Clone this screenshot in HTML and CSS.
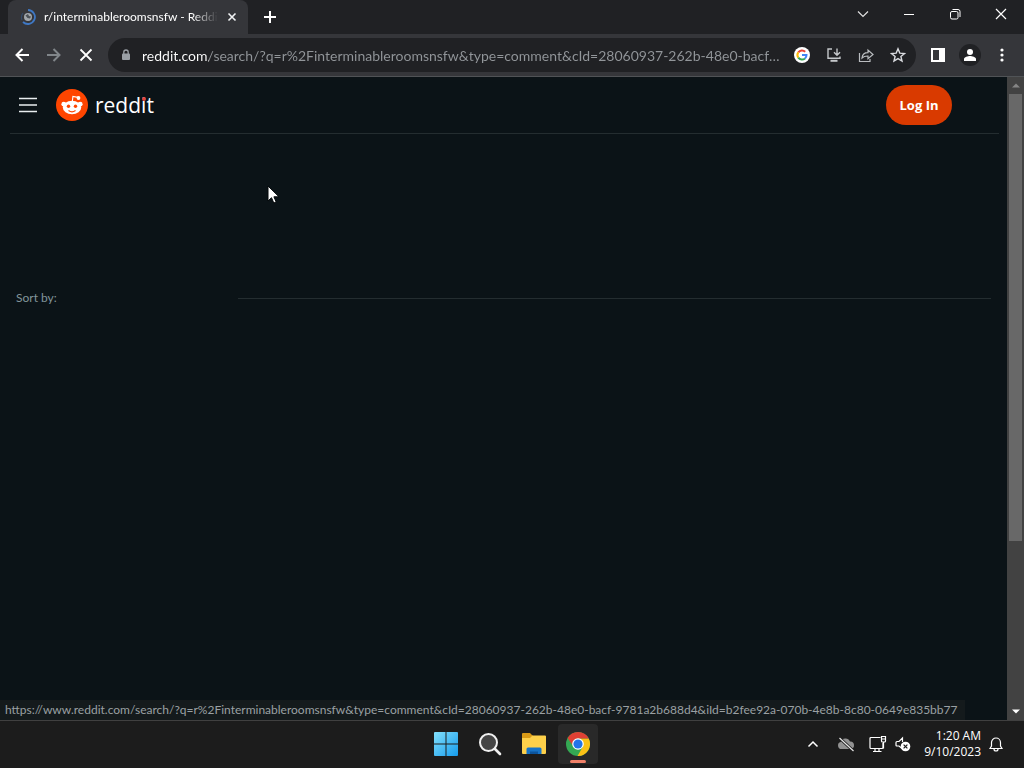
FILE: index.html
```html
<!DOCTYPE html>
<html lang="en">
<head>
<meta charset="utf-8">
<title>r/interminableroomsnsfw - Reddit</title>
<link rel="stylesheet" href="styles.css">
</head>
<body>
<header class="browser">
  <div class="tabstrip">
    <div class="tab">
      <svg class="favicon" width="16" height="16" viewBox="0 0 16 16" fill="none"><circle cx="8" cy="8" r="4" fill="#a0a6ab"/><path d="M5.500 6.500l2.500-1.500 1 2 2 .5-1 2-2.500-.5z" fill="#4b5157"/><path d="M8 1a7 7 0 1 1-5 12" stroke="#3f78c4" stroke-width="1.800"/><path d="M2 11A7 7 0 0 1 3 4" stroke="#334b6b" stroke-width="1.200"/></svg>
      <span class="tab-title">r/interminableroomsnsfw - Reddi</span>
      <button class="icon-btn tab-close" aria-label="Close tab"><svg width="10" height="10" viewBox="0 0 10 10" stroke="#f1f3f4" stroke-width="1.600"><path d="M1.500 1.500l7 7M8.500 1.500l-7 7"/></svg></button>
    </div>
    <button class="icon-btn new-tab" aria-label="New tab"><svg width="14" height="14" viewBox="0 0 14 14" stroke="#fff" stroke-width="2"><path d="M7 1v12M1 7h12"/></svg></button>
    <div class="window-controls">
      <button class="icon-btn" aria-label="Search tabs"><svg width="12" height="12" viewBox="0 0 12 12" fill="none" stroke="#e0e0e0" stroke-width="1.200"><path d="M1 3.500l5 5 5-5"/></svg></button>
      <button class="icon-btn" aria-label="Minimize"><svg width="10" height="12" viewBox="0 0 10 12" stroke="#fff"><path d="M0 6.500h10"/></svg></button>
      <button class="icon-btn" aria-label="Restore"><svg width="12" height="12" viewBox="0 0 12 12" fill="none" stroke="#fff"><rect x="1.500" y="3.500" width="7.500" height="7.500" rx="1.500"/><path d="M3.500 1.500H9a2 2 0 0 1 2 2V9"/></svg></button>
      <button class="icon-btn" aria-label="Close"><svg width="12" height="12" viewBox="0 0 12 12" stroke="#fff" stroke-width="1.200"><path d="M1 1l10 10M11 1L1 11"/></svg></button>
    </div>
  </div>
  <div class="toolbar">
    <div class="nav">
      <button class="icon-btn" aria-label="Back"><svg width="16" height="16" viewBox="0 0 16 16" fill="none" stroke="#fff" stroke-width="2"><path d="M15 8H2.500M8.500 2L2.500 8l6 6"/></svg></button>
      <button class="icon-btn" aria-label="Forward"><svg width="16" height="16" viewBox="0 0 16 16" fill="none" stroke="#81868a" stroke-width="2"><path d="M1 8h12.500M7.500 2l6 6-6 6"/></svg></button>
      <button class="icon-btn" aria-label="Stop loading"><svg width="14" height="14" viewBox="0 0 14 14" stroke="#fff" stroke-width="1.800"><path d="M1.500 1.500l11 11M12.500 1.500l-11 11"/></svg></button>
    </div>
    <div class="omnibox">
      <svg class="lock" width="10" height="12" viewBox="0 0 10 12"><rect x="1" y="4.500" width="8" height="6.500" rx="1" fill="#9aa0a6"/><path d="M2.800 5V3.200a2.200 2.200 0 0 1 4.400 0V5" fill="none" stroke="#9aa0a6" stroke-width="1.300"/></svg>
      <input class="url" type="text" aria-label="Address and search bar" value="reddit.com/search/?q=r%2Finterminableroomsnsfw&amp;type=comment&amp;cId=28060937-262b-48e0-bacf-9781a2b688d4&amp;iId=b2fee92a-070b-4e8b-8c80-0649e835bb77">
      <div class="page-actions">
        <button class="icon-btn" aria-label="Search with Google"><svg width="16" height="16" viewBox="0 0 16 16"><circle cx="8" cy="8" r="8" fill="#fff"/><g fill="none" stroke-width="2"><path d="M4.300 5.400A4.500 4.500 0 0 1 11.200 4.800" stroke="#ea4335"/><path d="M4.300 10.600a4.500 4.500 0 0 1 0-5.200" stroke="#fbbc05"/><path d="M11 11.400a4.500 4.500 0 0 1-6.700-.8" stroke="#34a853"/><path d="M8 8h4.500a4.500 4.500 0 0 1-1.500 3.400" stroke="#4285f4"/></g></svg></button>
        <button class="icon-btn" aria-label="Install app"><svg width="16" height="16" viewBox="0 0 16 16" fill="none" stroke="#c4c7ca" stroke-width="1.400"><path d="M6 2H2v9.300h12V9.500M11 1.500V8M8 5.300l3 3 3-3"/><path d="M4.500 13.800h7" stroke-width="2"/></svg></button>
        <button class="icon-btn" aria-label="Share"><svg width="16" height="16" viewBox="0 0 16 16" fill="none" stroke="#b9bcbf" stroke-width="1.200"><path d="M1.500 6v8.500H12V12"/><path d="M4 11c.3-3.400 2.300-5.300 6-5.300V3l5 4.500-5 4.300V9C7.300 8.900 5.500 9.500 4 11z"/></svg></button>
        <button class="icon-btn" aria-label="Bookmark this tab"><svg width="16" height="16" viewBox="0 0 16 16" fill="none" stroke="#dadce0" stroke-width="1.400"><path d="M8 1.800l1.800 4.300 4.700.4-3.600 3 1.100 4.600L8 11.600l-4 2.500 1.100-4.600-3.600-3 4.700-.4z"/></svg></button>
      </div>
    </div>
    <div class="tools">
      <button class="icon-btn" aria-label="Side panel"><svg width="16" height="16" viewBox="0 0 16 16"><path fill="#fff" fill-rule="evenodd" d="M1 1h14v14H1zM3 3v10h6V3z"/></svg></button>
      <button class="icon-btn profile" aria-label="Profile"><svg width="14" height="14" viewBox="0 0 14 14" fill="#fff"><circle cx="7" cy="4" r="3"/><path d="M1 13v-2c0-2 4-3 6-3s6 1 6 3v2z"/></svg></button>
      <button class="icon-btn" aria-label="Menu"><svg width="4" height="14" viewBox="0 0 4 14" fill="#fff"><circle cx="2" cy="2" r="1.600"/><circle cx="2" cy="7" r="1.600"/><circle cx="2" cy="12" r="1.600"/></svg></button>
    </div>
  </div>
</header>

<div class="viewport">
  <main class="page">
    <header class="site-header">
      <button class="icon-btn" aria-label="Open navigation"><svg width="18" height="16" viewBox="0 0 18 16" stroke="#e9eef0" stroke-width="1.300"><path d="M0 1.500h18M0 8h18M0 14.500h18"/></svg></button>
      <a class="brand" href="#">
        <svg width="32" height="32" viewBox="0 0 32 32"><circle cx="16" cy="16" r="16" fill="#ff4500"/><path d="M16.300 13l.6-5.600 5 1" fill="none" stroke="#fff" stroke-width="1.100"/><circle cx="22.500" cy="9" r="1.900" fill="#fff"/><g fill="#fff"><circle cx="7.800" cy="15.200" r="2.400"/><circle cx="24.200" cy="15.200" r="2.400"/><ellipse cx="16" cy="18.500" rx="9.200" ry="6.800"/></g><circle cx="12.500" cy="17.300" r="1.700" fill="#ff4500"/><circle cx="19.500" cy="17.300" r="1.700" fill="#ff4500"/><path d="M12.500 21.500c2 1.500 5 1.500 7 0" fill="none" stroke="#ff4500" stroke-width="1.100"/></svg>
        <span class="wordmark">redd<span class="dotted">i</span>t</span>
      </a>
      <button class="login">Log In</button>
    </header>
    <section class="sort">
      <span class="sort-label">Sort by:</span>
      <hr class="sort-rule">
    </section>
  </main>
  <div class="scrollbar">
    <button class="icon-btn scroll-btn" aria-label="Scroll up"><svg width="8" height="5" viewBox="0 0 8 5"><path d="M0 4.500L4 .5l4 4z" fill="#858585"/></svg></button>
    <div class="track"><div class="thumb"></div></div>
    <button class="icon-btn scroll-btn" aria-label="Scroll down"><svg width="8" height="5" viewBox="0 0 8 5"><path d="M0 .5l4 4 4-4z" fill="#fff"/></svg></button>
  </div>
  <div class="status">https://www.reddit.com/search/?q=r%2Finterminableroomsnsfw&amp;type=comment&amp;cId=28060937-262b-48e0-bacf-9781a2b688d4&amp;iId=b2fee92a-070b-4e8b-8c80-0649e835bb77</div>
  <svg class="pointer" width="13" height="19" viewBox="0 0 13 19"><path d="M1 1v15l3.500-3.300L6.800 18l2.400-1-2.300-5.200H12z" fill="#fff" stroke="#05090b"/></svg>
</div>

<footer class="taskbar">
  <nav class="apps">
    <button class="icon-btn app" aria-label="Start"><svg width="24" height="24" viewBox="0 0 24 24"><defs><linearGradient id="win" x2="1" y2="1"><stop stop-color="#83e0fc"/><stop offset="1" stop-color="#159bec"/></linearGradient></defs><path d="M0 1q0-1 1-1h10.500v11.500H0zM12.500 0H23q1 0 1 1v10.500H12.500zM0 12.500h11.500V24H1q-1 0-1-1zM12.500 12.500H24V23q0 1-1 1H12.500z" fill="url(#win)"/></svg></button>
    <button class="icon-btn app" aria-label="Search"><svg width="24" height="24" viewBox="0 0 24 24"><circle cx="10.500" cy="10.500" r="8.500" fill="#454545" stroke="#f0f0f0" stroke-width="2"/><path d="M17 17l5 5" stroke="#f0f0f0" stroke-width="2.600" stroke-linecap="round"/></svg></button>
    <button class="icon-btn app" aria-label="File Explorer"><svg width="26" height="24" viewBox="0 0 26 24"><path d="M1 2q0-1 1-1h7l2.500 2.500H12V9H1z" fill="#d99a16"/><path d="M1 6h8l2.500-2.500H24q1 0 1 1V21q0 1-1 1H2q-1 0-1-1z" fill="#fdd04a"/><path d="M5.500 22v-5q0-1.500 1.500-1.500h12q1.500 0 1.500 1.500v5z" fill="#1673c7"/><path d="M9 22v-2.500h8V22z" fill="#0c549c"/></svg></button>
    <button class="icon-btn app active" aria-label="Google Chrome"><svg width="24" height="24" viewBox="0 0 24 24"><circle cx="12" cy="12" r="12" fill="#34a853"/><path d="M12 6.500h10.700A12 12 0 0 1 11.500 24L17 14.500z" fill="#fbc116"/><path d="M1.600 6A12 12 0 0 1 12 0a12 12 0 0 1 10.700 6.500H12a5.500 5.500 0 0 0-5 7.500z" fill="#df4034"/><circle cx="12" cy="12" r="5.800" fill="#fff"/><circle cx="12" cy="12" r="4.600" fill="#2374e8"/></svg></button>
  </nav>
  <div class="tray">
    <button class="icon-btn" aria-label="Show hidden icons"><svg width="12" height="12" viewBox="0 0 12 12" fill="none" stroke="#fff" stroke-width="1.500"><path d="M1.500 8.500L6 4l4.500 4.500"/></svg></button>
    <button class="icon-btn" aria-label="OneDrive"><svg width="18" height="16" viewBox="0 0 18 16"><path d="M4.500 13a3.500 3.500 0 0 1-.8-6.900A5 5 0 0 1 13 5.500a3.700 3.700 0 0 1 .5 7.500z" fill="#929292"/><path d="M2.500 2l14 13" stroke="#1c1c1c" stroke-width="3"/><path d="M2.500 2l14 13" stroke="#e8e8e8" stroke-width="1.200"/></svg></button>
    <button class="icon-btn" aria-label="Network"><svg width="18" height="18" viewBox="0 0 18 18" fill="none" stroke="#fff" stroke-width="1.200"><path d="M11.500 2.500H2q-1 0-1 1v9q0 1 1 1h11q1 0 1-1V8M6 13.500v3M10 13.500v3M4 16.500h8.500"/><path d="M12.500 1.500h4V6q0 1-1 1h-2q-1 0-1-1zM12.500 4h4M14.500 7v6.500"/></svg></button>
    <button class="icon-btn" aria-label="Volume"><svg width="16" height="16" viewBox="0 0 16 16" fill="none" stroke="#fff" stroke-width="1.200"><path d="M7 12.500L4 10H2q-1 0-1-1V6.500q0-1 1-1h2L7.500 2v4"/><circle cx="10.500" cy="10.500" r="4.800" fill="#fff" stroke="none"/><path d="M8.600 8.600l3.800 3.800M12.400 8.600l-3.800 3.800" stroke="#1c1c1c"/></svg></button>
    <time class="clock"><span>1:20 AM</span><span>9/10/2023</span></time>
    <button class="icon-btn" aria-label="Notifications"><svg width="14" height="16" viewBox="0 0 14 16" fill="none" stroke="#fff" stroke-width="1.200"><path d="M2.500 6.500a4.500 4.500 0 0 1 9 0V10l1.500 2.500H1L2.500 10z"/><path d="M5 13a2 2 0 0 0 4 0"/></svg></button>
  </div>
</footer>
</body>
</html>
```

FILE: styles.css
```css
* { box-sizing: border-box; }

body {
  margin: 0;
  height: 100vh;
  display: flex;
  flex-direction: column;
  overflow: hidden;
  background: #0b1317;
  color: #fff;
  font: 12px/16px Lato, "Open Sans", sans-serif;
}

button, input { font: inherit; color: inherit; }

.icon-btn {
  display: flex;
  align-items: center;
  justify-content: center;
  padding: 0;
  border: 0;
  background: none;
}

.icon-btn svg { display: block; }

/* Browser chrome */
.browser {
  flex: none;
  background: #202124;
  border-bottom: 1px solid #505356;
}

.tabstrip {
  display: flex;
  align-items: stretch;
  height: 34px;
  padding-left: 8px;
}

.tab {
  display: flex;
  align-items: center;
  width: 240px;
  padding: 0 10px 0 12px;
  border-radius: 8px 8px 0 0;
  background: #35363a;
}

.favicon { flex: none; margin-right: 8px; }

.tab-title {
  flex: 1;
  overflow: hidden;
  white-space: nowrap;
  -webkit-mask-image: linear-gradient(to right, #000 85%, transparent);
  mask-image: linear-gradient(to right, #000 85%, transparent);
}

.tab-close { width: 12px; margin-left: 8px; }
.new-tab { width: 28px; margin-left: 8px; }

.window-controls {
  display: flex;
  margin-left: auto;
  padding-bottom: 6px;
}

.window-controls .icon-btn { width: 46px; }

.toolbar {
  display: flex;
  align-items: center;
  height: 42px;
  background: #35363a;
}

.nav { display: flex; padding: 0 6px; }
.nav .icon-btn { width: 32px; height: 32px; }

.omnibox {
  flex: 1;
  min-width: 0;
  display: flex;
  align-items: center;
  height: 34px;
  padding: 0 2px 0 13px;
  border-radius: 17px;
  background: #202124;
}

.lock { flex: none; margin-right: 11px; }

.url {
  flex: 1;
  min-width: 0;
  height: 24px;
  padding: 0;
  border: 0;
  outline: 0;
  font-size: 14px;
  text-overflow: ellipsis;
  background: linear-gradient(to right, #fff 67px, #92969a 67px);
  -webkit-background-clip: text;
  background-clip: text;
  color: transparent;
}

.page-actions { display: flex; margin-left: 4px; }
.page-actions .icon-btn { width: 32px; height: 32px; }

.tools { display: flex; align-items: center; padding: 0 6px; }
.tools .icon-btn { width: 32px; height: 32px; }

.tools .profile {
  width: 22px;
  height: 22px;
  margin: 0 5px;
  border-radius: 50%;
  background: #202124;
}

/* Web page */
.viewport {
  position: relative;
  flex: 1;
  min-height: 0;
  display: flex;
}

.page { flex: 1; padding: 0 8px 0 10px; }

.site-header {
  display: flex;
  align-items: center;
  height: 57px;
  padding: 0 47px 0 9px;
  border-bottom: 1px solid #242d30;
}

.brand {
  display: flex;
  align-items: center;
  gap: 7px;
  margin-left: 19px;
  color: #fff;
  text-decoration: none;
}

.wordmark {
  font: 500 21px/28px "Open Sans", sans-serif;
}

.dotted { position: relative; }

.dotted::after {
  content: "";
  position: absolute;
  top: 6px;
  left: 1px;
  width: 4px;
  height: 4px;
  border-radius: 50%;
  background: #e0443c;
}

.login {
  height: 40px;
  min-width: 66px;
  margin-left: auto;
  padding: 0 12px;
  border: 0;
  border-radius: 20px;
  background: #d93a00;
  font: 700 13px/16px "Open Sans", sans-serif;
}

.sort {
  display: flex;
  align-items: center;
  margin-top: 156px;
  padding: 0 8px 0 6px;
}

.sort-label { flex: 0 0 222px; color: #82959b; }

.sort-rule {
  flex: 1;
  height: 1px;
  margin: 0;
  border: 0;
  background: #242d30;
}

.scrollbar {
  flex: none;
  display: flex;
  flex-direction: column;
  width: 17px;
  background: #424242;
}

.scroll-btn { height: 17px; }
.track { flex: 1; padding: 0 2px; }
.thumb { height: 73.4%; background: #686868; }

.status {
  position: absolute;
  left: 0;
  bottom: 0;
  padding: 2px 8px 2px 5px;
  background: #141a1c;
  color: #9aa0a3;
  white-space: nowrap;
}

.pointer { position: absolute; left: 267px; top: 108px; }

/* Taskbar */
.taskbar {
  position: relative;
  flex: none;
  display: flex;
  align-items: center;
  justify-content: center;
  height: 48px;
  padding-bottom: 1px;
  border-top: 1px solid #404040;
  background: #1c1c1c;
}

.apps { display: flex; gap: 4px; }

.app {
  position: relative;
  width: 40px;
  height: 40px;
  border-radius: 4px;
}

.app.active { background: #292929; }

.app.active::after {
  content: "";
  position: absolute;
  bottom: 1px;
  left: 12px;
  width: 16px;
  height: 3px;
  border-radius: 2px;
  background: #f08068;
}

.tray {
  position: absolute;
  right: 21px;
  display: flex;
  align-items: center;
}

.tray .icon-btn:nth-child(1) { margin-right: 18px; }
.tray .icon-btn:nth-child(2) { margin-right: 14px; }
.tray .icon-btn:nth-child(3) { margin-right: 8px; }

.clock {
  display: flex;
  flex-direction: column;
  width: 70px;
  margin-right: 8px;
  text-align: right;
  font: 12px/16px "Open Sans", sans-serif;
}
```
